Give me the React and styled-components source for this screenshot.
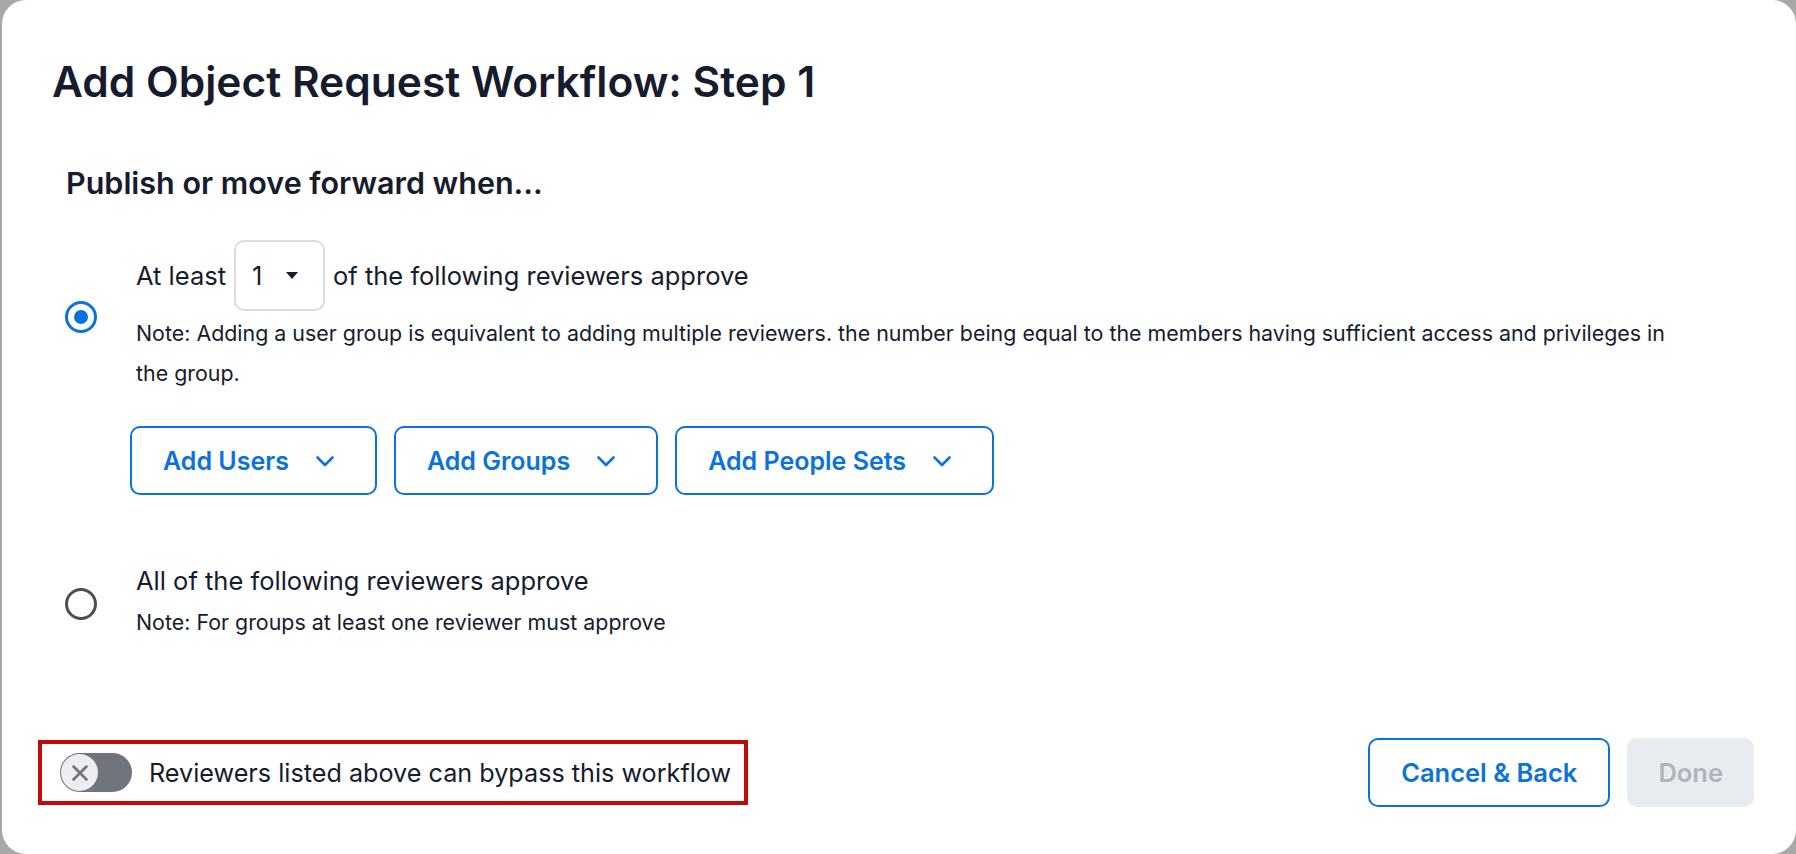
import styled, { createGlobalStyle } from "styled-components";

const GlobalStyle = createGlobalStyle`
   html, body {
      margin: 0;
      padding: 0;
      height: 100%;
      background: #a8a8a8;
   }
   body {
      font-family: Inter, "Noto Sans", sans-serif;
      color: #161c2d;
   }
   #root {
      height: 100%;
   }
`;

const Backdrop = styled.div`
   height: 100vh;
   padding-left: 2px;
   box-sizing: border-box;
   display: flex;
`;

const Modal = styled.div`
   flex: 1;
   background: #ffffff;
   border-radius: 24px;
   display: flex;
   flex-direction: column;
   padding: 56px 42px 47px 50px;
   box-sizing: border-box;
`;

const Title = styled.h1`
   margin: 0;
   font-size: 42.5px;
   line-height: 52px;
   font-weight: 600;
`;

const Body = styled.div`
   flex: 1;
   padding: 57px 0 0 14px;
`;

const Heading = styled.h2`
   margin: 0 0 39px;
   font-size: 30.5px;
   line-height: 36px;
   font-weight: 600;
`;

const Option = styled.div`
   display: flex;
   flex-direction: column;
   margin-bottom: ${(p) => p.gap || 0}px;
`;

const OptionRow = styled.div`
   display: flex;
   align-items: center;
   gap: 39px;
`;

const Radio = styled.span`
   width: 32px;
   height: 32px;
   flex: none;
   margin-left: -1px;
   border-radius: 50%;
   box-sizing: border-box;
   border: 3.5px solid ${(p) => (p.checked ? "#0a72dc" : "#4b4d57")};
   display: flex;
   align-items: center;
   justify-content: center;

   &::after {
      content: "";
      width: 14px;
      height: 14px;
      border-radius: 50%;
      background: #0a72dc;
      display: ${(p) => (p.checked ? "block" : "none")};
   }
`;

const LabelBlock = styled.div`
   display: flex;
   flex-direction: column;
`;

const LabelLine = styled.div`
   display: flex;
   align-items: center;
   gap: 8px;
   font-size: 25.5px;
   line-height: 32px;
   min-height: ${(p) => p.tall || 32}px;
`;

const Select = styled.div`
   width: 91px;
   height: 71px;
   box-sizing: border-box;
   border: 2px solid #dcdcdc;
   border-radius: 10px;
   display: flex;
   align-items: center;
   padding-left: 16px;
   gap: 24px;
   font-size: 25.5px;
`;

const Caret = styled.span`
   width: 0;
   height: 0;
   border-left: 6px solid transparent;
   border-right: 6px solid transparent;
   border-top: 7px solid #161c2d;
`;

const Note = styled.p`
   margin: ${(p) => p.top || 2}px 0 0;
   font-size: 21.4px;
   line-height: 40px;
   max-width: ${(p) => p.width || "none"};
`;

const ButtonRow = styled.div`
   display: flex;
   gap: 17px;
   margin: 33px 0 0 64px;
`;

const OutlineButton = styled.button`
   height: 69px;
   box-sizing: border-box;
   border: 2px solid #0a72dc;
   border-radius: 10px;
   background: #fff;
   color: #0a72dc;
   font-family: inherit;
   font-size: 25px;
   font-weight: 600;
   padding: 0 38px 0 31px;
   display: flex;
   align-items: center;
   gap: 24px;
`;

const Footer = styled.div`
   display: flex;
   align-items: center;
   justify-content: space-between;
`;

const Highlight = styled.div`
   margin-left: -14px;
   height: 65px;
   box-sizing: border-box;
   border: 4px solid #c00b0b;
   display: flex;
   align-items: center;
   padding: 0 13px 0 18px;
   gap: 17px;
`;

const Toggle = styled.span`
   width: 72px;
   height: 39px;
   border-radius: 20px;
   background: #70747d;
   display: flex;
   align-items: center;
   padding-left: 1px;
   box-sizing: border-box;
`;

const Knob = styled.span`
   width: 37px;
   height: 37px;
   border-radius: 50%;
   background: #eceef1;
   display: flex;
   align-items: center;
   justify-content: center;
`;

const ToggleLabel = styled.span`
   font-size: 25.2px;
   line-height: 32px;
`;

const Actions = styled.div`
   display: flex;
   gap: 17px;
`;

const ActionButton = styled.button`
   height: 69px;
   box-sizing: border-box;
   border-radius: 10px;
   font-family: inherit;
   font-size: 25.5px;
   font-weight: 600;
   padding: 0 ${(p) => (p.disabled ? 29 : 31)}px;
   border: 2px solid ${(p) => (p.disabled ? "#e8ebef" : "#0a72dc")};
   background: ${(p) => (p.disabled ? "#e8ebef" : "#fff")};
   color: ${(p) => (p.disabled ? "#b1b4bd" : "#0a72dc")};
`;

function Chevron() {
   return (
      <svg width="24" height="24" viewBox="0 0 24 24" fill="none">
         <path
            d="M4.5 8.5l7.5 7.5 7.5-7.5"
            stroke="#0a72dc"
            strokeWidth="2.6"
            strokeLinecap="round"
            strokeLinejoin="round"
         />
      </svg>
   );
}

function CrossIcon() {
   return (
      <svg width="20" height="20" viewBox="0 0 20 20" fill="none">
         <path
            d="M3.5 3.5l13 13M16.5 3.5l-13 13"
            stroke="#70747d"
            strokeWidth="2.6"
            strokeLinecap="round"
         />
      </svg>
   );
}

export default function App() {
   return (
      <>
         <GlobalStyle />
         <Backdrop>
            <Modal>
               <Title>Add Object Request Workflow: Step 1</Title>
               <Body>
                  <Heading>Publish or move forward when...</Heading>

                  <Option gap={70}>
                     <OptionRow>
                        <Radio checked />
                        <LabelBlock>
                           <LabelLine tall={71}>
                              At least
                              <Select>
                                 1
                                 <Caret />
                              </Select>
                              of the following reviewers approve
                           </LabelLine>
                           <Note width="1560px">
                              Note: Adding a user group is equivalent to adding
                              multiple reviewers. the number being equal to the
                              members having sufficient access and privileges in
                              the group.
                           </Note>
                        </LabelBlock>
                     </OptionRow>
                     <ButtonRow>
                        <OutlineButton>
                           Add Users
                           <Chevron />
                        </OutlineButton>
                        <OutlineButton>
                           Add Groups
                           <Chevron />
                        </OutlineButton>
                        <OutlineButton>
                           Add People Sets
                           <Chevron />
                        </OutlineButton>
                     </ButtonRow>
                  </Option>

                  <Option>
                     <OptionRow>
                        <Radio />
                        <LabelBlock>
                           <LabelLine>All of the following reviewers approve</LabelLine>
                           <Note top={5}>Note: For groups at least one reviewer must approve</Note>
                        </LabelBlock>
                     </OptionRow>
                  </Option>
               </Body>

               <Footer>
                  <Highlight>
                     <Toggle>
                        <Knob>
                           <CrossIcon />
                        </Knob>
                     </Toggle>
                     <ToggleLabel>Reviewers listed above can bypass this workflow</ToggleLabel>
                  </Highlight>
                  <Actions>
                     <ActionButton>Cancel &amp; Back</ActionButton>
                     <ActionButton disabled>Done</ActionButton>
                  </Actions>
               </Footer>
            </Modal>
         </Backdrop>
      </>
   );
}
